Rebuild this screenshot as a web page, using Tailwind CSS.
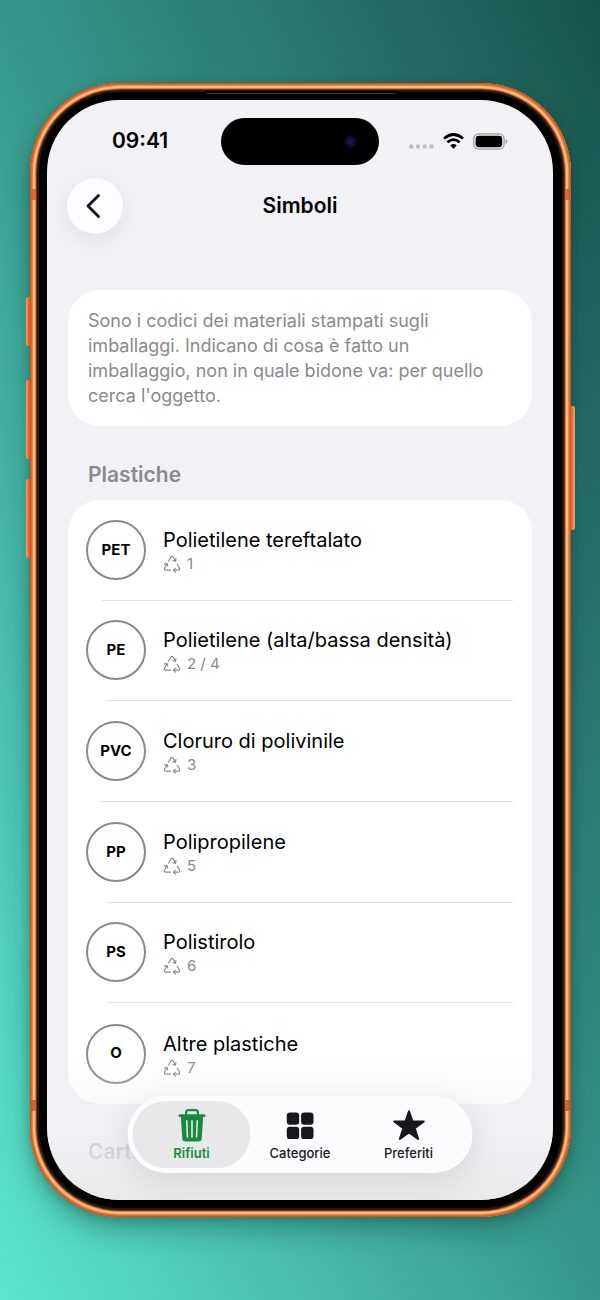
<!DOCTYPE html>
<html lang="it">
<head>
<meta charset="utf-8">
<meta name="viewport" content="width=device-width, initial-scale=1">
<title>Simboli</title>
<script src="https://cdn.jsdelivr.net/npm/@tailwindcss/browser@4"></script>
</head>
<body class="h-screen min-h-[1300px] bg-[linear-gradient(to_top_right,#5ce6cc,#37978a_50%,#18534d)] pt-[83px] pr-[29px] pb-[83px] pl-[30px] font-['Inter',sans-serif] text-black">

<svg class="hidden" aria-hidden="true">
  <symbol id="recycle" viewBox="0 0 18 18">
    <g fill="none" stroke="#8a8a8e" stroke-width="1.2" stroke-linecap="round" stroke-linejoin="round">
      <path d="M5.600 6 7.800 2.200Q9 .6 10.200 2.200L12.400 5.900"/>
      <path d="M12.900 3.500 12.500 6.200 9.900 5.500"/>
      <path d="M14.200 9.200 16.500 13Q17.200 15 15.200 15.200H10.600"/>
      <path d="M12.300 13.300 10.400 15.200 12.300 17.100"/>
      <path d="M7.400 15.200H2.800Q.8 15 1.600 13L3.800 9"/>
      <path d="M1.500 9.200 4 8.500 4.700 11"/>
    </g>
  </symbol>
</svg>

<div class="relative h-full rounded-[90px] bg-black py-[17px] pr-[18px] pl-[17px] shadow-[0_14px_26px_rgba(0,50,45,0.32),0_2px_8px_rgba(0,50,45,0.25)]">
  <!-- side buttons -->
  <div class="absolute top-[214px] -left-[4px] h-[49px] w-[6px] rounded-l-[2px] bg-linear-to-r from-[#f7a76f] via-[#d5602a] to-[#cf5d28]"></div>
  <div class="absolute top-[297px] -left-[4px] h-[79px] w-[6px] rounded-l-[2px] bg-linear-to-r from-[#f7a76f] via-[#d5602a] to-[#cf5d28]"></div>
  <div class="absolute top-[396px] -left-[4px] h-[79px] w-[6px] rounded-l-[2px] bg-linear-to-r from-[#f7a76f] via-[#d5602a] to-[#cf5d28]"></div>
  <div class="absolute top-[323px] -right-[4px] h-[124px] w-[6px] rounded-r-[2px] bg-linear-to-l from-[#f7a76f] via-[#e0703a] to-[#e87a40]"></div>
  <!-- metal rim -->
  <div class="absolute inset-0 rounded-[90px] shadow-[inset_0_0_0_1px_#c9571f,inset_0_0_0_2px_#e06a2e,inset_0_0_0_3px_#ee8848,inset_0_0_0_5px_#ffbb84,inset_0_0_0_6px_#e07a40,inset_0_0_0_7px_#7a3a1a,inset_0_0_0_9px_#201a16]"></div>
  <div class="absolute top-[106px] left-0 h-[11px] w-[6px] bg-[#d2592a]/80"></div>
  <div class="absolute top-[106px] right-0 h-[11px] w-[6px] bg-[#d2592a]/80"></div>
  <div class="absolute bottom-[106px] left-0 h-[11px] w-[6px] bg-[#c4562a]/80"></div>
  <div class="absolute right-0 bottom-[106px] h-[11px] w-[6px] bg-[#c4562a]/80"></div>
  <div class="absolute top-[8px] left-1/2 h-[3px] w-[192px] -translate-x-1/2 rounded-b-full border-b border-[#33302e] bg-black"></div>

  <div class="relative flex h-full flex-col overflow-hidden rounded-[72px] bg-[#f1f1f6]">
    <!-- status bar -->
    <div class="grid h-[82px] shrink-0 grid-cols-[1fr_158px_1fr] items-center px-[45px]">
      <span class="pl-[20px] text-[21px] leading-[26px] font-semibold">09:41</span>
      <div class="flex h-[47px] items-center justify-end rounded-full bg-black pr-[22px]">
        <span class="size-[13px] rounded-full bg-[radial-gradient(circle,#1b1a5a_0,#0d0c34_45%,#05050f_75%)]"></span>
      </div>
      <div class="flex items-center justify-end gap-[9px]">
        <svg class="mt-[10px] h-[5px] w-[25px]" viewBox="0 0 25 5" fill="#bebec3"><circle cx="2.300" cy="2.500" r="2.200"/><circle cx="9" cy="2.500" r="2.200"/><circle cx="15.700" cy="2.500" r="2.200"/><circle cx="22.400" cy="2.500" r="2.200"/></svg>
        <svg class="h-[16px] w-[21px]" viewBox="0 0 21 16" fill="none" stroke="#000" stroke-width="2.700"><path d="M1 5.600Q10.500-2.600 20 5.600"/><path d="M4.400 9.200Q10.500 4 16.600 9.200"/><path d="M10.500 15.700 7.300 12.400Q10.500 9.700 13.700 12.400Z" fill="#000" stroke="none"/></svg>
        <svg class="h-[17px] w-[35px]" viewBox="0 0 35 17"><rect x=".7" y=".9" width="30.400" height="15.200" rx="5" fill="none" stroke="#9c9ca0" stroke-width="1.200"/><rect x="2.600" y="2.800" width="26.600" height="11.400" rx="3.400"/><path d="M32.600 6Q34.300 6.800 34.300 8.500T32.600 11Z" fill="#9c9ca0"/></svg>
      </div>
    </div>

    <!-- navigation bar -->
    <header class="-mt-[4px] grid shrink-0 grid-cols-[56px_1fr_56px] items-center px-[20px]">
      <button aria-label="Indietro" class="flex size-[56px] items-center justify-center rounded-full bg-[#fdfdff] shadow-[0_6px_24px_rgba(0,0,0,0.08)]">
        <svg class="mr-[4px] h-[26px] w-[16px]" viewBox="0 0 16 26" fill="none" stroke="#17171c" stroke-width="2.900" stroke-linecap="round" stroke-linejoin="round"><path d="M13.500 2.500 3 13 13.500 23.500"/></svg>
      </button>
      <h1 class="text-center text-[21px] leading-[26px] font-semibold">Simboli</h1>
    </header>

    <main class="flex shrink-0 flex-col px-[21px] pt-[56px]">
      <p class="rounded-[32px] bg-white px-[20px] py-[18px] text-[18px] leading-[25px] text-[#8a8a8e]">Sono i codici dei materiali stampati sugli<br>imballaggi. Indicano di cosa è fatto un<br>imballaggio, non in quale bidone va: per quello<br>cerca l'oggetto.</p>

      <h2 class="mt-[35px] px-[20px] text-[21px] leading-[28px] font-semibold text-[#8a8a8e]">Plastiche</h2>
      <ul class="mt-[11px] grid min-h-[604px] auto-rows-fr rounded-[32px] bg-white">
        <li class="flex flex-col">
          <div class="flex grow items-center gap-[17px] pl-[18px]"><span class="flex size-[60px] items-center justify-center rounded-full border-2 border-[#8a8a8e] text-[15px] font-bold">PET</span><div class="pt-[2px]"><p class="text-[20px] leading-[26px]">Polietilene tereftalato</p><p class="flex items-center gap-[6px] text-[15px] leading-[22px] text-[#8a8a8e]"><svg class="size-[18px]"><use href="#recycle"/></svg>1</p></div></div>
          <hr class="mr-[19px] ml-[34px] border-[#e3e3e5]">
        </li>
        <li class="flex flex-col">
          <div class="flex grow items-center gap-[17px] pl-[18px]"><span class="flex size-[60px] items-center justify-center rounded-full border-2 border-[#8a8a8e] text-[15px] font-bold">PE</span><div class="pt-[2px]"><p class="text-[20px] leading-[26px]">Polietilene (alta/bassa densità)</p><p class="flex items-center gap-[6px] text-[15px] leading-[22px] text-[#8a8a8e]"><svg class="size-[18px]"><use href="#recycle"/></svg>2 / 4</p></div></div>
          <hr class="mr-[19px] ml-[39px] border-[#e3e3e5]">
        </li>
        <li class="flex flex-col">
          <div class="flex grow items-center gap-[17px] pl-[18px]"><span class="flex size-[60px] items-center justify-center rounded-full border-2 border-[#8a8a8e] text-[15px] font-bold">PVC</span><div class="pt-[2px]"><p class="text-[20px] leading-[26px]">Cloruro di polivinile</p><p class="flex items-center gap-[6px] text-[15px] leading-[22px] text-[#8a8a8e]"><svg class="size-[18px]"><use href="#recycle"/></svg>3</p></div></div>
          <hr class="mr-[19px] ml-[32px] border-[#e3e3e5]">
        </li>
        <li class="flex flex-col">
          <div class="flex grow items-center gap-[17px] pl-[18px]"><span class="flex size-[60px] items-center justify-center rounded-full border-2 border-[#8a8a8e] text-[15px] font-bold">PP</span><div class="pt-[2px]"><p class="text-[20px] leading-[26px]">Polipropilene</p><p class="flex items-center gap-[6px] text-[15px] leading-[22px] text-[#8a8a8e]"><svg class="size-[18px]"><use href="#recycle"/></svg>5</p></div></div>
          <hr class="mr-[19px] ml-[39px] border-[#e3e3e5]">
        </li>
        <li class="flex flex-col">
          <div class="flex grow items-center gap-[17px] pl-[18px]"><span class="flex size-[60px] items-center justify-center rounded-full border-2 border-[#8a8a8e] text-[15px] font-bold">PS</span><div class="pt-[2px]"><p class="text-[20px] leading-[26px]">Polistirolo</p><p class="flex items-center gap-[6px] text-[15px] leading-[22px] text-[#8a8a8e]"><svg class="size-[18px]"><use href="#recycle"/></svg>6</p></div></div>
          <hr class="mr-[19px] ml-[39px] border-[#e3e3e5]">
        </li>
        <li class="flex flex-col">
          <div class="flex grow items-center gap-[17px] pl-[18px]"><span class="flex size-[60px] items-center justify-center rounded-full border-2 border-[#8a8a8e] text-[15px] font-bold">O</span><div class="pt-[2px]"><p class="text-[20px] leading-[26px]">Altre plastiche</p><p class="flex items-center gap-[6px] text-[15px] leading-[22px] text-[#8a8a8e]"><svg class="size-[18px]"><use href="#recycle"/></svg>7</p></div></div>
        </li>
      </ul>

      <h2 class="mt-[34px] px-[20px] text-[21px] leading-[28px] font-semibold text-[#8a8a8e]/60">Carta</h2>
    </main>

    <!-- fade under the tab bar -->
    <div class="pointer-events-none absolute inset-x-0 bottom-0 h-[150px] bg-linear-to-b from-[#f1f1f4]/0 via-[#efeff2]/50 via-60% to-[#eaeaec]"></div>

    <nav class="absolute bottom-[27px] left-1/2 flex h-[77px] w-[345px] -translate-x-1/2 items-center rounded-full bg-[#fcfcfe] p-[5px] shadow-[0_8px_32px_rgba(0,0,0,0.10)]">
      <button aria-current="page" class="flex h-full w-[118px] flex-col items-center justify-center rounded-full bg-[#e8e8eb] text-[13px] leading-[16px] font-semibold text-[#178a42]">
        <svg class="mb-[3px] h-[33px] w-[29px]" viewBox="0 0 29 33" fill="#178a42"><path d="M8.600 6V3.700Q8.600 1.200 11.100 1.200H17.900Q20.400 1.200 20.400 3.700V6" fill="none" stroke="#178a42" stroke-width="2.200"/><rect x="1" y="5.300" width="27" height="2.700" rx="1.300"/><path fill-rule="evenodd" d="M3.300 7H25.700L24.200 29.600Q24 32.600 21 32.600H8Q5 32.600 4.800 29.600ZM8.500 11.200 9.200 28.400H10.700L10 11.200ZM13.700 11.200V28.400H15.300V11.200ZM19 11.200 18.300 28.400H19.800L20.500 11.200Z"/></svg>
        Rifiuti
      </button>
      <button class="flex h-full w-[99px] flex-col items-center justify-center text-[13px] leading-[16px] font-medium text-[#17171c]">
        <svg class="mb-[3px] size-[33px]" viewBox="0 0 33 33" fill="#17171c"><rect x="3.300" y="3.400" width="12.400" height="12.400" rx="3.200"/><rect x="17.600" y="3.400" width="12.400" height="12.400" rx="3.200"/><rect x="3.300" y="17.700" width="12.400" height="12.400" rx="3.200"/><rect x="17.600" y="17.700" width="12.400" height="12.400" rx="3.200"/></svg>
        Categorie
      </button>
      <button class="flex h-full w-[118px] flex-col items-center justify-center text-[13px] leading-[16px] font-medium text-[#17171c]">
        <svg class="mb-[3px] size-[33px]" viewBox="0 0 33 33" fill="#17171c" stroke="#17171c" stroke-width="2" stroke-linejoin="round"><path d="M16.500 2.200 20 12.500H31.300L22.200 19.300 25.700 30 16.500 23.500 7.300 30 10.800 19.300 1.700 12.500H13Z"/></svg>
        Preferiti
      </button>
    </nav>
  </div>
</div>
</body>
</html>
